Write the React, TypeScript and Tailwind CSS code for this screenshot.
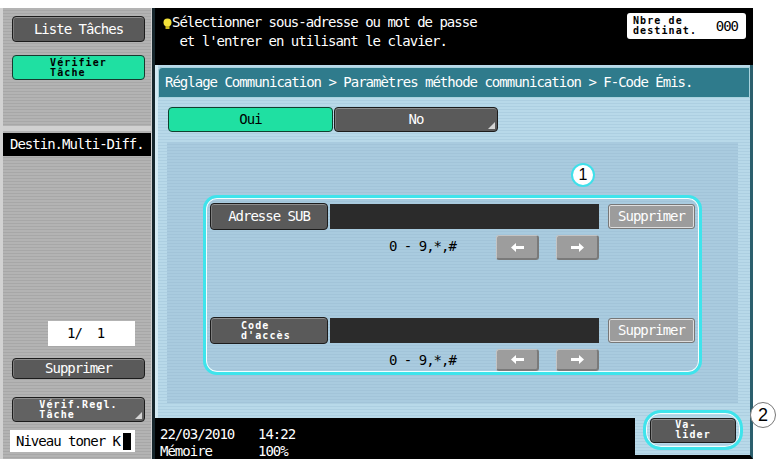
import React from "react";

type Kids = { children?: React.ReactNode; className?: string };

// two-line tiny bold caption used on several keys
const Small = ({ lines, className = "" }: { lines: string[]; className?: string }) => (
  <div className={`text-[10px] font-bold leading-[10px] tracking-[1.1px] ${className}`}>
    {lines.map((l) => (
      <div key={l} className="whitespace-pre">{l}</div>
    ))}
  </div>
);

// folded corner marker on keys that open a sub screen
const Corner = () => (
  <svg className="absolute right-[2px] bottom-[2px]" width="7" height="7" viewBox="0 0 7 7">
    <polygon points="7,0 7,7 0,7" fill="#d4d4d4" />
  </svg>
);

const Arrow = ({ dir }: { dir: "left" | "right" }) => (
  <svg width="13" height="9" viewBox="0 0 13 9">
    <polygon
      points={dir === "left" ? "0,4.5 5,0 5,3 13,3 13,6 5,6 5,9" : "13,4.5 8,0 8,3 0,3 0,6 8,6 8,9"}
      fill="#fff"
    />
  </svg>
);

const Bulb = () => (
  <svg className="mt-[5px]" width="9" height="12" viewBox="0 0 9 12">
    <circle cx="4.5" cy="4.5" r="4" fill="#f3e23a" />
    <rect x="2.5" y="8" width="4" height="3" fill="#c9b820" />
  </svg>
);

const DarkBtn = ({ children, className = "" }: Kids) => (
  <div
    className={`relative flex items-center justify-center rounded-[4px] border border-[#1c1c1c] bg-[#5a5a5a] text-white shadow-[inset_0_1px_0_#8e8e8e,inset_1px_0_0_#7c7c7c] ${className}`}
  >
    {children}
  </div>
);

const LightBtn = ({ children, className = "" }: Kids) => (
  <div
    className={`flex items-center justify-center rounded-[3px] border border-[#777] bg-[#9c9c9c] text-white shadow-[inset_0_0_0_1px_#dedede] ${className}`}
  >
    {children}
  </div>
);

const KeyBtn = ({ dir }: { dir: "left" | "right" }) => (
  <div className="w-[43px] h-full flex items-center justify-center rounded-[3px] bg-[#9d9d9d] border-t border-l border-t-[#c4c4c4] border-l-[#c4c4c4] border-b-2 border-r-2 border-b-[#7a7a7a] border-r-[#7a7a7a]">
    <Arrow dir={dir} />
  </div>
);

const EntryRow = ({ label, keysH }: { label: React.ReactNode; keysH: string }) => (
  <>
    <div className="flex items-center h-[27px]">
      <DarkBtn className="ml-[4px] w-[118px] h-full rounded-[3px]">{label}</DarkBtn>
      <div className="ml-[2px] w-[269px] h-[25px] bg-[#2b2b2b]" />
      <LightBtn className="ml-[9px] w-[87px] h-[25px]">Supprimer</LightBtn>
    </div>
    <div className={`flex mt-[5px] ${keysH}`}>
      <div className="ml-[183px] w-[107px] pt-[1px] text-black whitespace-pre">0 - 9,*,#</div>
      <KeyBtn dir="left" />
      <div className="w-[17px]" />
      <KeyBtn dir="right" />
    </div>
  </>
);

const App = () => {
  return (
    <div className="relative w-[779px] h-[459px] overflow-hidden bg-white pt-[8px] font-['DejaVu_Sans_Mono',monospace] text-[14px] tracking-[-1px]">
      <div className="flex w-[753px] h-[451px]">
        {/* left column */}
        <div className="w-[152px] h-full flex flex-col border-l-[3px] border-l-[#d2d2d2] border-r border-r-[#d0d0d0] bg-[image:repeating-linear-gradient(180deg,#b3b3b3_0px,#b3b3b3_2px,#a7a7a7_2px,#a7a7a7_3px)]">
          <DarkBtn className="mt-[8px] ml-[9px] w-[133px] h-[26px]">Liste Tâches</DarkBtn>
          <div className="mt-[13px] ml-[9px] w-[133px] h-[25px] flex items-center justify-center rounded-[4px] border border-[#17392e] bg-[#1fe0a2] text-black">
            <Small lines={["Vérifier", "Tâche"]} />
          </div>
          <div className="mt-[46px] h-[5px] bg-[#d0d0d0]" />
          <div className="mt-[2px] h-[23px] bg-black text-white flex items-center pl-[7px]">Destin.Multi-Diff.</div>
          <div className="flex-1" />
          <div className="ml-[45px] w-[87px] h-[25px] bg-white text-black flex items-center pl-[19px] whitespace-pre">1/  1</div>
          <DarkBtn className="mt-[12px] ml-[9px] w-[133px] h-[21px] shadow-[inset_0_0_0_1px_#dcdcdc]">Supprimer</DarkBtn>
          <DarkBtn className="mt-[18px] ml-[9px] w-[133px] h-[25px] bg-[#626262]">
            <Small lines={["Vérif.Regl.", "Tâche"]} />
            <Corner />
          </DarkBtn>
          <div className="mt-[8px] ml-[7px] w-[125px] h-[22px] bg-white text-black flex items-center pl-[6px]">
            Niveau toner K
            <span className="ml-[3px] w-[8px] h-[17px] bg-black" />
          </div>
          <div className="h-[7px]" />
        </div>
        <div className="w-[3px] bg-[#16262c]" />

        {/* right column */}
        <div className="flex-1 flex flex-col">
          <div className="h-[57px] bg-black flex justify-between">
            <div className="flex pl-[8px] pt-[5px]">
              <Bulb />
              <div className="text-white leading-[19px] whitespace-pre">
                <div>Sélectionner sous-adresse ou mot de passe</div>
                <div> et l'entrer en utilisant le clavier.</div>
              </div>
            </div>
            <div className="mt-[5px] mr-[7px] w-[119px] h-[26px] bg-white rounded-[3px] flex items-center justify-between pl-[6px] pr-[8px] text-black">
              <Small lines={["Nbre de", "destinat."]} className="tracking-[0.4px]" />
              <span>000</span>
            </div>
          </div>

          <div className="flex-1 flex flex-col border-l-[3px] border-r-[3px] border-l-[#d3e9f2] border-r-[#2c5f6d] bg-[image:repeating-linear-gradient(180deg,#b8d9e9_0px,#b8d9e9_2px,#adcfe1_2px,#adcfe1_3px)]">
            <div className="mt-[2px] h-[31px] bg-[#2f7b8c] border border-[#a9d3de] rounded-tl-[4px] flex items-center pl-[6px] text-white whitespace-pre">
              Réglage Communication &gt; Paramètres méthode communication &gt; F-Code Émis.
            </div>
            <div className="flex mt-[9px] ml-[10px] h-[25px]">
              <div className="w-[165px] h-full flex items-center justify-center rounded-[4px] border border-[#10402f] bg-[#1fe0a2] text-black">Oui</div>
              <DarkBtn className="ml-[1px] w-[164px] h-full">
                No
                <Corner />
              </DarkBtn>
            </div>
            <div className="mt-[10px] ml-[9px] mb-[15px] w-[571px] flex-1 flex flex-col bg-[image:repeating-linear-gradient(180deg,#a9cbdf_0px,#a9cbdf_2px,#a2c4d9_2px,#a2c4d9_3px)]">
              <div className="mt-[21px] ml-[404px] w-[24px] h-[24px] rounded-full bg-white border-2 border-[#3fe0ea] flex items-center justify-center font-['Liberation_Sans',Arial,sans-serif] text-[16px] tracking-normal text-black">
                1
              </div>
              <div className="mt-[8px] ml-[36px] w-[499px] h-[180px] rounded-[14px] border-[3px] border-[#3fe4ec] shadow-[inset_0_0_0_1px_#f2ffff] pt-[5px] flex flex-col">
                <EntryRow label="Adresse SUB" keysH="h-[25px]" />
                <div className="h-[57px]" />
                <EntryRow
                  label={<Small lines={["Code", "d'accès"]} className="w-[56px]" />}
                  keysH="h-[22px]"
                />
              </div>
            </div>
          </div>

          <div className="h-[41px] flex">
            <div className="flex-1 bg-black text-white pl-[5px] pt-[8px] leading-[17px] whitespace-pre">
              <div className="flex">
                <span className="w-[98px]">22/03/2010</span>
                <span>14:22</span>
              </div>
              <div className="flex">
                <span className="w-[98px]">Mémoire</span>
                <span>100%</span>
              </div>
            </div>
            <div className="relative w-[118px] border-r-[3px] border-r-[#2c5f6d] border-b-[4px] border-b-black bg-[image:repeating-linear-gradient(180deg,#b8d9e9_0px,#b8d9e9_2px,#adcfe1_2px,#adcfe1_3px)]">
              <div className="absolute left-[8px] top-[-8px] w-[100px] h-[40px] rounded-[18px] border-[3px] border-[#3fe4ec] shadow-[inset_0_0_0_1px_#f2ffff] flex items-center justify-center">
                <DarkBtn className="w-[86px] h-[25px] rounded-[3px] shadow-[inset_0_0_0_1px_#a8a8a8]">
                  <Small lines={["Va-", "lider"]} />
                </DarkBtn>
              </div>
            </div>
          </div>
        </div>
      </div>

      <div className="absolute left-[750px] top-[402px] w-[26px] h-[26px] rounded-full bg-white border border-[#777] flex items-center justify-center font-['Liberation_Sans',Arial,sans-serif] text-[18px] tracking-normal text-black">
        2
      </div>
    </div>
  );
};

export default App;
